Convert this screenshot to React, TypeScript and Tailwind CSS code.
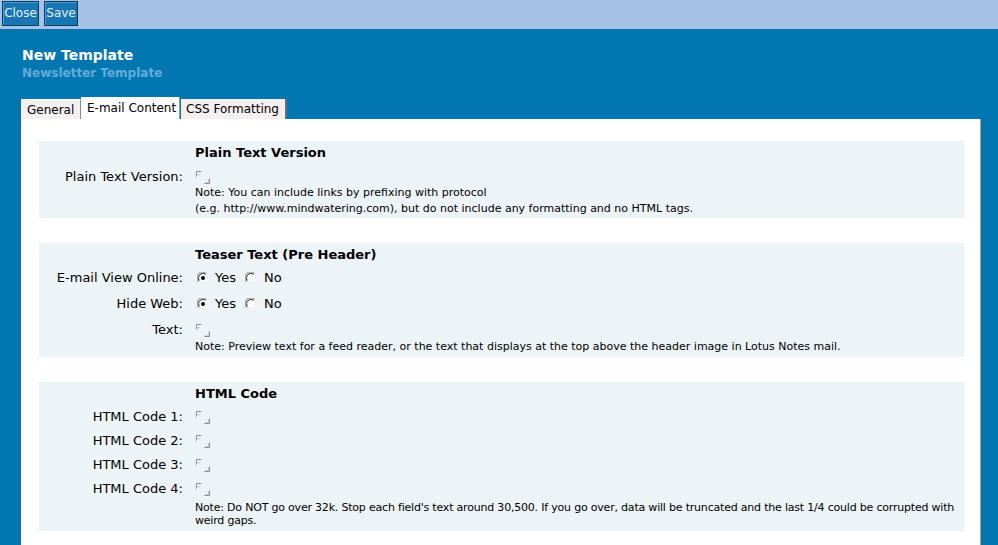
import React from "react";

const FONT = { fontFamily: '"DejaVu Sans", Verdana, sans-serif' };

function BrokenImage() {
  return (
    <svg width="16" height="13" viewBox="0 0 16 13" className="block">
      <path d="M1.5 5.5 V0.5 H6.5" stroke="#8a8a8a" fill="none" />
      <path d="M2.5 5 V1.5 H6" stroke="#f4f4f4" fill="none" />
      <path d="M3.5 4.5 V3.5 H4.5" stroke="#b0b0b0" fill="none" />
      <path d="M9.5 12.5 H14.5 V7.5" stroke="#8a8a8a" fill="none" />
      <path d="M10 11.5 H13.5 V8" stroke="#d0d0d0" fill="none" />
    </svg>
  );
}

function Radio({ checked }: { checked?: boolean }) {
  return (
    <svg width="12" height="12" viewBox="0 0 12 12" className="block">
      <circle cx="6" cy="6" r="5.5" fill="#fff" />
      <path d="M1.5 9.5 A5.5 5.5 0 0 1 9.5 1.5" stroke="#808080" fill="none" />
      <path d="M2.3 8.6 A4.5 4.5 0 0 1 8.6 2.3" stroke="#202020" fill="none" />
      <path d="M10 2.5 A5.5 5.5 0 0 1 2.5 10" stroke="#e6e6e6" fill="none" />
      {checked && <circle cx="6" cy="6" r="2" fill="#000" />}
    </svg>
  );
}

function YesNo() {
  return (
    <div className="flex items-center h-full text-[13px]">
      <span className="ml-[2px]"><Radio checked /></span>
      <span className="ml-[6px]">Yes</span>
      <span className="ml-[9px]"><Radio /></span>
      <span className="ml-[7px]">No</span>
    </div>
  );
}

function Row({ label, h, children }: { label: string; h: string; children: React.ReactNode }) {
  return (
    <div className="grid grid-cols-[144px_1fr] gap-x-[12px]">
      <div className={`text-right text-[13px] whitespace-nowrap ${h}`}>{label}</div>
      <div>{children}</div>
    </div>
  );
}

function Heading({ children }: { children: React.ReactNode }) {
  return (
    <div className="grid grid-cols-[144px_1fr] gap-x-[12px]">
      <div />
      <div className="h-[16px] leading-[16px] text-[13px] font-bold">{children}</div>
    </div>
  );
}

export default function App() {
  return (
    <div style={FONT} className="w-full h-[545px] overflow-hidden bg-[#0276b1] text-black">
      {/* toolbar */}
      <div className="h-[29px] bg-[#a6c3e6] flex items-start pt-[1px] pl-[2px] gap-[5px]">
        <button className="h-[25px] w-[37px] border border-[#0b3d62] bg-[#1877b3] text-[#e4eff8] text-[12px] leading-[23px] shadow-[inset_1px_1px_0_#4c9bcf]">
          Close
        </button>
        <button className="h-[25px] w-[34px] border border-[#0b3d62] bg-[#1877b3] text-[#e4eff8] text-[12px] leading-[23px] shadow-[inset_1px_1px_0_#4c9bcf]">
          Save
        </button>
      </div>

      {/* header */}
      <div className="pl-[21px] pt-[17px]">
        <div className="pl-[1px] h-[18px] leading-[18px] text-[14px] font-bold text-white">New Template</div>
        <div className="pl-[1px] mt-[1px] h-[16px] leading-[16px] text-[12px] font-bold text-[#62acd9]">
          Newsletter Template
        </div>
        <div className="mt-[16px] flex items-end h-[22px] text-[12px]">
          <div className="h-[20px] leading-[20px] w-[60px] pl-[6px] bg-[#f4f0f0] border-t border-t-[#ffffff] border-r border-r-[#8c8c8c] whitespace-nowrap">
            General
          </div>
          <div className="h-[22px] leading-[22px] w-[99px] pl-[6px] bg-white border-r border-r-[#9a9a9a] whitespace-nowrap">
            E-mail Content
          </div>
          <div className="ml-[1px] h-[20px] leading-[20px] w-[106px] pl-[5px] bg-[#f4f0f0] border-r-2 border-r-[#6f6f6f] whitespace-nowrap">
            CSS Formatting
          </div>
        </div>
      </div>

      {/* panel */}
      <div className="ml-[21px] mr-[17px] h-[426px] bg-white border-r border-r-[#b5a36e] pl-[18px] pr-[16px] pt-[22px] flex flex-col gap-[25px]">
        <div className="bg-[#edf4f7] pt-[4px] pb-[1px]">
          <Heading>Plain Text Version</Heading>
          <div className="mt-[8px]">
            <Row label="Plain Text Version:" h="leading-[16px]">
              <div className="h-[16px] flex items-center"><BrokenImage /></div>
              <div className="text-[11px] leading-[16px]">
                Note: You can include links by prefixing with protocol
                <br />
                (e.g. http://www.mindwatering.com), but do not include any formatting and no HTML tags.
              </div>
            </Row>
          </div>
        </div>

        <div className="bg-[#edf4f7] pt-[4px] pb-[2px]">
          <Heading>Teaser Text (Pre Header)</Heading>
          <div className="mt-[2px]">
            <Row label="E-mail View Online:" h="leading-[26px]">
              <div className="h-[26px]"><YesNo /></div>
            </Row>
            <Row label="Hide Web:" h="leading-[26px]">
              <div className="h-[26px]"><YesNo /></div>
            </Row>
            <div className="mt-[4px]">
              <Row label="Text:" h="leading-[18px]">
                <div className="h-[18px] flex items-center"><BrokenImage /></div>
                <div className="text-[11px] leading-[16px]">
                  Note: Preview text for a feed reader, or the text that displays at the top above the header image in Lotus Notes mail.
                </div>
              </Row>
            </div>
          </div>
        </div>

        <div className="bg-[#edf4f7] pt-[4px] pb-[4px]">
          <Heading>HTML Code</Heading>
          <div className="mt-[3px]">
            {["HTML Code 1:", "HTML Code 2:", "HTML Code 3:"].map((l) => (
              <Row key={l} label={l} h="leading-[24px]">
                <div className="h-[24px] flex items-center"><BrokenImage /></div>
              </Row>
            ))}
            <Row label="HTML Code 4:" h="leading-[24px]">
              <div className="h-[24px] flex items-center"><BrokenImage /></div>
              <div className="text-[11px] leading-[13px] tracking-[-0.2px]">
                <span className="whitespace-nowrap">
                  Note: Do NOT go over 32k. Stop each field's text around 30,500. If you go over, data will be truncated and the last 1/4 could be corrupted with
                </span>
                <br />
                weird gaps.
              </div>
            </Row>
          </div>
        </div>
      </div>
    </div>
  );
}
